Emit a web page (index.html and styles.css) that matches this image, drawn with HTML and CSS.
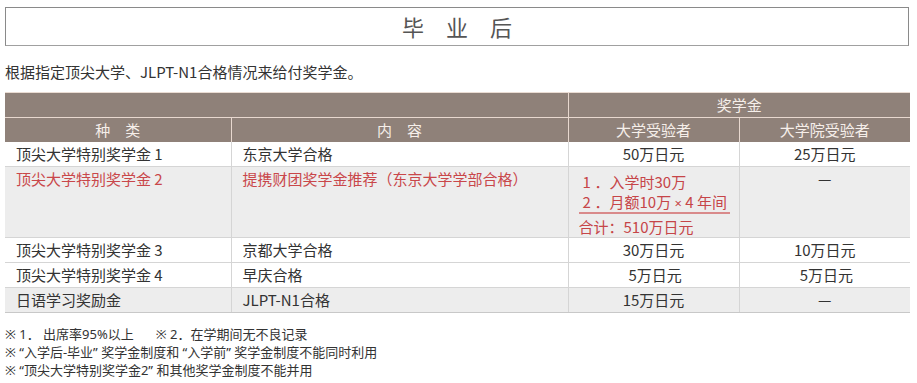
FILE: index.html
```html
<!DOCTYPE html>
<html lang="zh-CN">
<head>
<meta charset="utf-8">
<title>毕业后</title>
<link rel="stylesheet" href="styles.css">
</head>
<body>
<div class="page">
  <div class="title">毕　业　后</div>
  <p class="intro">根据指定顶尖大学、JLPT-N1合格情况来给付奖学金。</p>
  <table class="grid">
    <colgroup>
      <col class="c1"><col class="c2"><col class="c3"><col class="c4">
    </colgroup>
    <thead>
      <tr class="h1">
        <th colspan="2" class="first"></th>
        <th colspan="2" class="last">奖学金</th>
      </tr>
      <tr class="h2">
        <th class="first">种　类</th>
        <th>内　容</th>
        <th>大学受验者</th>
        <th class="last">大学院受验者</th>
      </tr>
    </thead>
    <tbody>
      <tr class="row">
        <td class="txt">顶尖大学特别奖学金 1</td>
        <td class="txt">东京大学合格</td>
        <td class="num">50万日元</td>
        <td class="num">25万日元</td>
      </tr>
      <tr class="row tall shade red">
        <td class="txt">顶尖大学特别奖学金 2</td>
        <td class="txt">提携财团奖学金推荐（东京大学学部合格）</td>
        <td class="detail">
          <div class="plan">
            <div class="pl"><span class="no">1</span>．入学时30万</div>
            <div class="pl under"><span class="no">2</span>．月额10万 <span class="times">×</span> 4 年间</div>
            <div class="pl sum">合计：510万日元</div>
          </div>
        </td>
        <td class="num dash">—</td>
      </tr>
      <tr class="row">
        <td class="txt">顶尖大学特别奖学金 3</td>
        <td class="txt">京都大学合格</td>
        <td class="num">30万日元</td>
        <td class="num">10万日元</td>
      </tr>
      <tr class="row">
        <td class="txt">顶尖大学特别奖学金 4</td>
        <td class="txt">早庆合格</td>
        <td class="num">&nbsp;5万日元</td>
        <td class="num">&nbsp;5万日元</td>
      </tr>
      <tr class="row shade">
        <td class="txt">日语学习奖励金</td>
        <td class="txt">JLPT-N1合格</td>
        <td class="num">15万日元</td>
        <td class="num">—</td>
      </tr>
    </tbody>
  </table>
  <div class="notes">
    <div class="note">※ 1． 出席率95%以上<span class="gap"></span>※ 2．在学期间无不良记录</div>
    <div class="note">※ “入学后-毕业” 奖学金制度和 “入学前” 奖学金制度不能同时利用</div>
    <div class="note">※ “顶尖大学特别奖学金2” 和其他奖学金制度不能并用</div>
  </div>
</div>
</body>
</html>
```
FILE: styles.css
```css
html, body {
  margin: 0;
  padding: 0;
  background: #ffffff;
}
body {
  font-family: "Noto Sans CJK SC", "Noto Sans", sans-serif;
  color: #333333;
}
.page {
  padding: 7px 7px 0 5px;
}
.title {
  width: 902px;
  height: 37px;
  border: 1px solid #8a8a8a;
  border-bottom-color: #a0a0a0;
  display: flex;
  align-items: center;
  justify-content: center;
  font-size: 22px;
  color: #555555;
  line-height: 37px;
}
.intro {
  margin: 16px 0 0 0;
  font-size: 15px;
  line-height: 20px;
  color: #333333;
}
.grid {
  margin-top: 10px;
  border-collapse: collapse;
  table-layout: fixed;
  width: 905px;
  font-size: 15px;
  border-top: 1px solid #eadcd3;
}
.c1 { width: 226px; }
.c2 { width: 337px; }
.c3 { width: 171px; }
.c4 { width: 171px; }
.grid th {
  background: #8f8179;
  color: #f6efea;
  font-weight: normal;
  height: 24px;
  line-height: 24px;
  padding: 0;
  text-align: center;
  border: 1px solid #e8d8cf;
  border-top: none;
  border-bottom: none;
}
.grid .h1 th {
  border-bottom: 1px solid #e8d8cf;
}
.grid th.first { border-left: none; }
.grid th.last { border-right: none; }
.grid td {
  padding: 0;
  height: 24px;
  line-height: 24px;
  border-bottom: 1px solid #d5d5d5;
  border-left: 1px solid #d5d5d5;
  vertical-align: middle;
  color: #333333;
  white-space: nowrap;
  overflow: hidden;
}
.grid td:first-child { border-left: none; }
.grid td.txt { padding-left: 11px; }
.grid td.num { text-align: center; }
.grid .shade td { background: #ededed; }
.grid .tall td {
  height: 70px;
  vertical-align: top;
}
.grid .tall td.txt,
.grid .tall td.dash {
  padding-top: 1px;
  line-height: 22px;
  height: 69px;
}
.grid .red td.txt { color: #c9474a; }
.grid td.detail {
  padding: 5px 0 0 10px;
  height: 65px;
}
.plan {
  width: 151px;
  color: #c64548;
}
.pl {
  height: 20px;
  line-height: 20px;
  padding-left: 4px;
  overflow: hidden;
}
.no {
  display: inline-block;
  width: 12px;
}
.times {
  font-family: "Noto Sans", sans-serif;
  font-size: 13px;
}
.pl.under {
  border-bottom: 2px solid #d98a8b;
}
.pl.sum {
  padding-left: 0;
  padding-top: 3px;
}
.grid tbody tr:last-child td {
  border-bottom: 1px solid #c8c8c8;
}
.notes {
  margin-top: 12px;
  font-family: "Noto Sans", "Noto Sans CJK SC", sans-serif;
  font-size: 13px;
  color: #333333;
}
.note {
  height: 18px;
  line-height: 18px;
}
.gap {
  display: inline-block;
  width: 22px;
}
```
